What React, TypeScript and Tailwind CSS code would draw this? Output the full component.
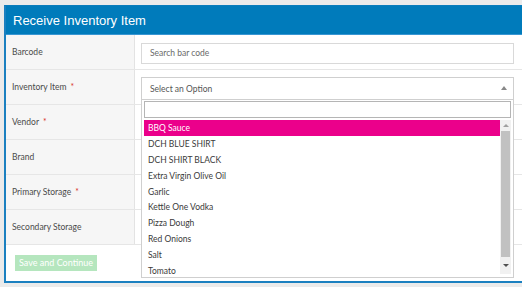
import React from "react";

const items = [
  "BBQ Sauce",
  "DCH BLUE SHIRT",
  "DCH SHIRT BLACK",
  "Extra Virgin Olive Oil",
  "Garlic",
  "Kettle One Vodka",
  "Pizza Dough",
  "Red Onions",
  "Salt",
  "Tomato",
];

const rows: { label: string; req: boolean }[] = [
  { label: "Barcode", req: false },
  { label: "Inventory Item", req: true },
  { label: "Vendor", req: true },
  { label: "Brand", req: false },
  { label: "Primary Storage", req: true },
  { label: "Secondary Storage", req: false },
];

function Row({ label, req, children }: { label: string; req: boolean; children?: React.ReactNode }) {
  return (
    <div className="flex h-[35px] border-b border-[#e6e6e6]">
      <div className="w-[129px] shrink-0 bg-[#f6f6f6] border-r border-[#e3e3e3] pl-[6px] pt-[11px] leading-[12px] text-[#4a4a4a]">
        {label}
        {req && <span className="text-[#d9342b] ml-[4px]">*</span>}
      </div>
      <div className="flex-1 bg-white pl-[6px] pr-[8px] pt-[7px]">{children}</div>
    </div>
  );
}

export default function App() {
  return (
    <div
      className="w-[522px] h-[287px] bg-[#ebebeb] overflow-hidden pt-[5px] pl-[4px] text-[8.5px]"
      style={{ fontFamily: "Lato, 'Open Sans', sans-serif" }}
    >
      <div className="relative h-[278px] border-l-2 border-b-2 border-[#1b80c0] bg-white border-t border-t-[#0a7cbc]">
        <div
          className="h-[29px] bg-[#007bbb] border-b border-[#3896d3] text-white text-[13px] pl-[7px] leading-[29px]"
          style={{ fontFamily: "'Liberation Sans', Arial, sans-serif" }}
        >
          Receive Inventory Item
        </div>
        <Row label={rows[0].label} req={rows[0].req}>
          <div className="h-[21px] mt-[1px] border border-[#d9d9d9] bg-white pl-[8px] leading-[19px] text-[#6a6a6a]">
            Search bar code
          </div>
        </Row>
        <Row label={rows[1].label} req={rows[1].req}>
          <div className="relative h-[23px] border border-[#cfcfcf] bg-white pl-[8px] leading-[23px] text-[#555]">
            Select an Option
            <span className="absolute right-[6px] top-[8px] w-0 h-0 border-l-[3px] border-r-[3px] border-b-[4px] border-l-transparent border-r-transparent border-b-[#888]"></span>
          </div>
        </Row>
        {rows.slice(2).map((r) => (
          <Row key={r.label} label={r.label} req={r.req} />
        ))}
        <div className="h-[36px] pl-[9px] pt-[10px]">
          <div className="w-[82px] h-[16px] bg-[#b5e6be] text-white text-[9px] leading-[16px] text-center">
            Save and Continue
          </div>
        </div>

        <div className="absolute left-[135px] top-[94px] w-[373px] h-[178px] bg-white border border-[#cfcfcf] border-t-0 px-[2px] pt-[1px]">
          <div className="h-[17px] border border-[#b5b5b5] bg-white"></div>
          <div className="flex mt-[2px] h-[154px] overflow-hidden">
            <div className="flex-1 overflow-hidden">
              {items.map((it, i) => (
                <div
                  key={it}
                  className={
                    "h-[15.9px] leading-[16px] pl-[4px] " +
                    (i === 0 ? "bg-[#eb008b] text-white" : "text-[#3a3a3a]")
                  }
                >
                  {it}
                </div>
              ))}
            </div>
            <div className="w-[11px] bg-[#f1f1f1] flex flex-col items-center">
              <div className="h-[11px] flex items-center justify-center">
                <span className="w-0 h-0 border-l-[3px] border-r-[3px] border-b-[3px] border-l-transparent border-r-transparent border-b-[#a0a0a0]"></span>
              </div>
              <div className="w-[9px] h-[126px] bg-[#c1c1c1]"></div>
              <div className="flex-1 flex items-center justify-center">
                <span className="w-0 h-0 border-l-[3px] border-r-[3px] border-t-[3px] border-l-transparent border-r-transparent border-t-[#505050]"></span>
              </div>
            </div>
          </div>
        </div>
      </div>
    </div>
  );
}
